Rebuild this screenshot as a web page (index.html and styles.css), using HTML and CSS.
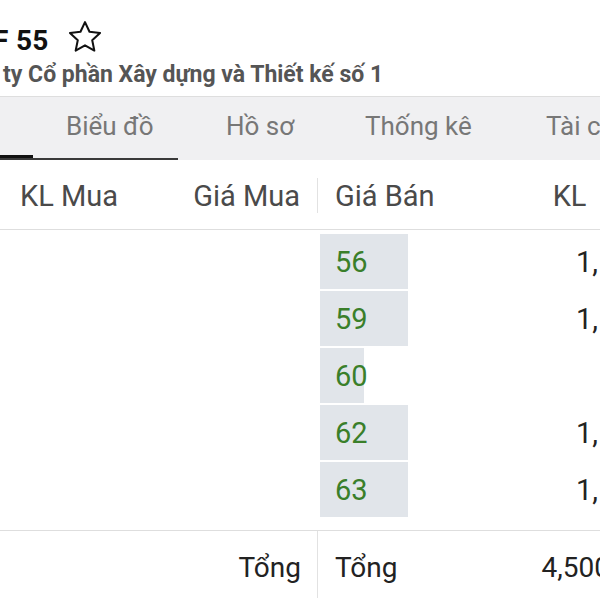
FILE: index.html
```html
<!DOCTYPE html>
<html lang="vi">
<head>
<meta charset="utf-8">
<link rel="stylesheet" href="styles.css">
</head>
<body>
<div class="page">
  <header class="top">
    <div class="title-row">
      <span class="ticker">F 55</span>
      <svg class="star" viewBox="0 0 24 24" width="38" height="38"><path d="M12 2.6l2.85 6.1 6.65.75-4.95 4.55 1.35 6.6L12 17.3l-5.9 3.3 1.35-6.6L2.5 9.45l6.65-.75z" fill="none" stroke="#111" stroke-width="1.3" stroke-linejoin="round"/></svg>
    </div>
    <div class="company">ty Cổ phần Xây dựng và Thiết kế số 1</div>
  </header>
  <nav class="tabs">
    <span class="tab">Biểu đồ</span>
    <span class="tab">Hồ sơ</span>
    <span class="tab">Thống kê</span>
    <span class="tab">Tài c</span>
    <span class="ind-thin"></span>
    <span class="ind-thick"></span>
  </nav>
  <div class="book">
    <div class="row head">
      <div class="half left">
        <span class="c1">KL Mua</span>
        <span class="c2">Giá Mua</span>
      </div>
      <div class="half right">
        <span class="c3">Giá Bán</span>
        <span class="c4 kl-head">KL</span>
      </div>
    </div>
    <div class="body">
      <div class="row line">
        <div class="half left"></div>
        <div class="half right"><span class="price"><span class="bar" style="width:88px"></span><span class="pv">56</span></span><span class="c4 qty">1,</span></div>
      </div>
      <div class="row line">
        <div class="half left"></div>
        <div class="half right"><span class="price"><span class="bar" style="width:88px"></span><span class="pv">59</span></span><span class="c4 qty">1,</span></div>
      </div>
      <div class="row line">
        <div class="half left"></div>
        <div class="half right"><span class="price"><span class="bar" style="width:44px"></span><span class="pv">60</span></span><span class="c4 qty"></span></div>
      </div>
      <div class="row line">
        <div class="half left"></div>
        <div class="half right"><span class="price"><span class="bar" style="width:88px"></span><span class="pv">62</span></span><span class="c4 qty">1,</span></div>
      </div>
      <div class="row line">
        <div class="half left"></div>
        <div class="half right"><span class="price"><span class="bar" style="width:88px"></span><span class="pv">63</span></span><span class="c4 qty">1,</span></div>
      </div>
    </div>
    <div class="row foot">
      <div class="half left">
        <span class="c2 tot">Tổng</span>
      </div>
      <div class="half right">
        <span class="c3 tot">Tổng</span>
        <span class="c4 total-v">4,500</span>
      </div>
    </div>
  </div>
</div>
</body>
</html>
```
FILE: styles.css
```css
* { box-sizing: border-box; }
html, body { margin: 0; padding: 0; }
body {
  width: 600px;
  height: 600px;
  overflow: hidden;
  background: #fff;
  font-family: Roboto, "Noto Sans", sans-serif;
}
.page { width: 600px; overflow: hidden; }
.top {
  height: 97px;
  padding-top: 18px;
  border-bottom: 1px solid #dedede;
}
.title-row {
  display: flex;
  align-items: center;
  height: 44px;
}
.ticker {
  font-size: 28px;
  font-weight: 700;
  color: #111;
  margin-left: -7px;
  letter-spacing: 0.3px;
}
.star { margin-left: 17px; margin-top: -6px; }
.company {
  margin-top: -1px;
  padding-left: 3px;
  font-size: 23px;
  font-weight: 700;
  color: #555;
  white-space: nowrap;
}
.tabs {
  position: relative;
  display: flex;
  height: 63px;
  background: #f0f0f2;
  padding-left: 66px;
  padding-top: 14px;
  white-space: nowrap;
  overflow: hidden;
}
.tab {
  flex: none;
  font-size: 26px;
  color: #777;
}
.tab:nth-child(1) { width: 160px; }
.tab:nth-child(2) { width: 139px; }
.tab:nth-child(3) { width: 181px; }
.ind-thin {
  position: absolute;
  left: 0;
  bottom: 0;
  width: 178px;
  height: 2px;
  background: #3a3a3a;
}
.ind-thick {
  position: absolute;
  left: 0;
  bottom: 2px;
  width: 33px;
  height: 3px;
  background: #111;
}
.row { display: flex; white-space: nowrap; }
.half { display: flex; align-items: center; }
.left { width: 318px; flex: none; }
.right { width: 282px; flex: none; }
.head {
  height: 70px;
  border-bottom: 1px solid #dedede;
  font-size: 29px;
  color: #4a4a4a;
}
.head .left { border-right: 1px solid #e2e2e2; }
.head .half { height: 35px; margin-top: 18px; }
.c1 { padding-left: 20px; }
.c2 { margin-left: auto; padding-right: 17px; }
.c3 { padding-left: 17px; }
.kl-head { margin-left: 118px; }
.body { padding-top: 3px; padding-bottom: 12px; }
.line { height: 57px; }
.line .half { height: 57px; }
.price {
  position: relative;
  display: flex;
  align-items: center;
  width: 120px;
  height: 55px;
  margin-left: 2px;
  flex: none;
}
.bar {
  position: absolute;
  left: 0;
  top: 0;
  height: 55px;
  background: #e1e5ea;
}
.pv {
  position: relative;
  padding-left: 15px;
  font-size: 29px;
  color: #3a7f2a;
}
.qty {
  margin-left: 136px;
  font-size: 29px;
  color: #222;
}
.foot {
  height: 68px;
  border-top: 1px solid #dedede;
  font-size: 28px;
  color: #222;
}
.foot .left { border-right: 1px solid #e2e2e2; }
.foot .half { height: 68px; }
.foot .c2 { padding-right: 16px; }
.tot { padding-top: 4px; }
.total-v { margin-left: 144px; padding-top: 4px; }
```
